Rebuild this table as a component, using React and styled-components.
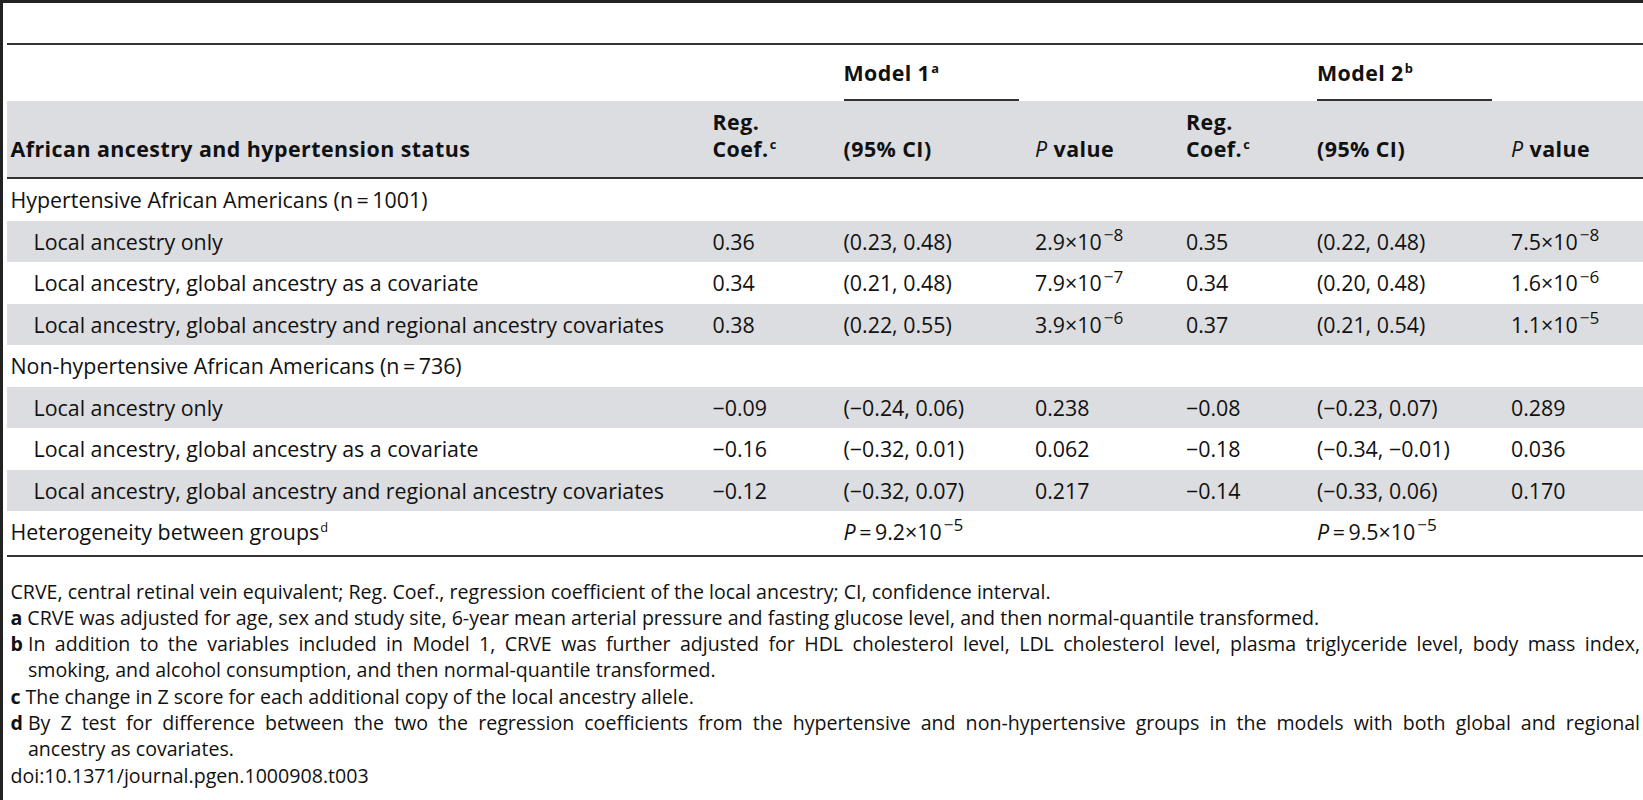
import styled, { createGlobalStyle } from "styled-components";

const GlobalStyle = createGlobalStyle`
  html, body {
    margin: 0;
    padding: 0;
    background: #fff;
  }
  body {
    font-family: "Open Sans", "Liberation Sans", sans-serif;
    color: #111;
  }
`;

const COLS = "702px 131px 191.5px 151px 131px 194px 1fr";

const Page = styled.div`
  box-sizing: border-box;
  width: 1643px;
  height: 800px;
  overflow: hidden;
  border-top: 3px solid #222;
  border-left: 3px solid #222;
  padding: 40px 0 0 4px;
`;

const Table = styled.div`
  border-top: 2px solid #333;
  border-bottom: 2px solid #333;
  font-size: 21.4px;
`;

const ModelRow = styled.div`
  display: grid;
  grid-template-columns: ${COLS};
  height: 56px;
  align-items: end;
`;

const ModelLabel = styled.div`
  grid-column: ${(p) => p.col};
  width: 175px;
  margin-left: 3.5px;
  padding-bottom: 13.5px;
  border-bottom: 2px solid #333;
  font-weight: 700;
  letter-spacing: 0.4px;
  line-height: 27px;
`;

const HeadRow = styled.div`
  display: grid;
  grid-template-columns: ${COLS};
  height: 76px;
  align-items: end;
  background: #dcdde0;
  border-bottom: 2px solid #333;
`;

const HeadCell = styled.div`
  padding: 0 0 15px 3.5px;
  font-weight: 700;
  letter-spacing: 0.45px;
  line-height: 27px;
`;

const Row = styled.div`
  display: grid;
  grid-template-columns: ${COLS};
  align-items: center;
  height: ${(p) => (p.last ? "44px" : "41.5px")};
  padding-bottom: ${(p) => (p.last ? "3px" : "0")};
  box-sizing: border-box;
  background: ${(p) => (p.shaded ? "#dcdde0" : "transparent")};
`;

const Cell = styled.div`
  padding-left: ${(p) => (p.indent ? "26.5px" : "3.5px")};
  white-space: nowrap;
  line-height: 27px;
`;

const Sup = styled.sup`
  font-size: 0.6em;
  line-height: 0;
  vertical-align: 0.6em;
  margin-left: 1px;
`;

const Exp = styled.span`
  font-size: 0.8em;
  vertical-align: 0.5em;
  line-height: 0;
  margin-left: 2px;
`;

const Ital = styled.i`
  font-style: italic;
  font-weight: ${(p) => (p.light ? 400 : "inherit")};
`;

const Notes = styled.div`
  margin-top: 21.5px;
  padding: 0 3px 0 3.5px;
  font-size: 19.6px;
  line-height: 26.3px;
`;

const Note = styled.div`
  display: flex;
  gap: 5px;
`;

const NoteKey = styled.b`
  font-weight: 700;
`;

const NoteText = styled.div`
  flex: 1;
  min-width: 0;
`;

const JustLine = styled.span`
  display: block;
  text-align: justify;
  text-align-last: justify;
`;

const Sci = ({ m, e }) => (
  <>
    {m}×10<Exp>−{e}</Exp>
  </>
);

const PEq = ({ m, e }) => (
  <>
    <Ital>P</Ital>
    {"\u2009=\u2009"}
    <Sci m={m} e={e} />
  </>
);

const groups = [
  {
    title: "Hypertensive African Americans (n\u2009=\u20091001)",
    rows: [
      ["Local ancestry only", "0.36", "(0.23, 0.48)", <Sci m="2.9" e="8" />, "0.35", "(0.22, 0.48)", <Sci m="7.5" e="8" />],
      ["Local ancestry, global ancestry as a covariate", "0.34", "(0.21, 0.48)", <Sci m="7.9" e="7" />, "0.34", "(0.20, 0.48)", <Sci m="1.6" e="6" />],
      ["Local ancestry, global ancestry and regional ancestry covariates", "0.38", "(0.22, 0.55)", <Sci m="3.9" e="6" />, "0.37", "(0.21, 0.54)", <Sci m="1.1" e="5" />],
    ],
  },
  {
    title: "Non-hypertensive African Americans (n\u2009=\u2009736)",
    rows: [
      ["Local ancestry only", "−0.09", "(−0.24, 0.06)", "0.238", "−0.08", "(−0.23, 0.07)", "0.289"],
      ["Local ancestry, global ancestry as a covariate", "−0.16", "(−0.32, 0.01)", "0.062", "−0.18", "(−0.34, −0.01)", "0.036"],
      ["Local ancestry, global ancestry and regional ancestry covariates", "−0.12", "(−0.32, 0.07)", "0.217", "−0.14", "(−0.33, 0.06)", "0.170"],
    ],
  },
];

export default function App() {
  return (
    <Page>
      <GlobalStyle />
      <Table>
        <ModelRow>
          <ModelLabel col={3}>
            Model 1<Sup>a</Sup>
          </ModelLabel>
          <ModelLabel col={6}>
            Model 2<Sup>b</Sup>
          </ModelLabel>
        </ModelRow>
        <HeadRow>
          <HeadCell>African ancestry and hypertension status</HeadCell>
          <HeadCell>
            Reg.
            <br />
            Coef.<Sup>c</Sup>
          </HeadCell>
          <HeadCell>(95% CI)</HeadCell>
          <HeadCell>
            <Ital light>P</Ital> value
          </HeadCell>
          <HeadCell>
            Reg.
            <br />
            Coef.<Sup>c</Sup>
          </HeadCell>
          <HeadCell>(95% CI)</HeadCell>
          <HeadCell>
            <Ital light>P</Ital> value
          </HeadCell>
        </HeadRow>

        {groups.map((g) => (
          <div key={g.title}>
            <Row>
              <Cell>{g.title}</Cell>
            </Row>
            {g.rows.map((r, i) => (
              <Row key={i} shaded={i % 2 === 0}>
                {r.map((v, j) => (
                  <Cell key={j} indent={j === 0}>
                    {v}
                  </Cell>
                ))}
              </Row>
            ))}
          </div>
        ))}

        <Row last>
          <Cell>
            Heterogeneity between groups<Sup>d</Sup>
          </Cell>
          <Cell />
          <Cell>
            <PEq m="9.2" e="5" />
          </Cell>
          <Cell />
          <Cell />
          <Cell>
            <PEq m="9.5" e="5" />
          </Cell>
          <Cell />
        </Row>
      </Table>

      <Notes>
        <div>
          CRVE, central retinal vein equivalent; Reg. Coef., regression coefficient of the local ancestry; CI,
          confidence interval.
        </div>
        <Note>
          <NoteKey>a</NoteKey>
          <NoteText>
            CRVE was adjusted for age, sex and study site, 6-year mean arterial pressure and fasting glucose level,
            and then normal-quantile transformed.
          </NoteText>
        </Note>
        <Note>
          <NoteKey>b</NoteKey>
          <NoteText>
            <JustLine>
              In addition to the variables included in Model 1, CRVE was further adjusted for HDL cholesterol level,
              LDL cholesterol level, plasma triglyceride level, body mass index,
            </JustLine>
            smoking, and alcohol consumption, and then normal-quantile transformed.
          </NoteText>
        </Note>
        <Note>
          <NoteKey>c</NoteKey>
          <NoteText>The change in Z score for each additional copy of the local ancestry allele.</NoteText>
        </Note>
        <Note>
          <NoteKey>d</NoteKey>
          <NoteText>
            <JustLine>
              By Z test for difference between the two the regression coefficients from the hypertensive and
              non-hypertensive groups in the models with both global and regional
            </JustLine>
            ancestry as covariates.
          </NoteText>
        </Note>
        <div>doi:10.1371/journal.pgen.1000908.t003</div>
      </Notes>
    </Page>
  );
}
